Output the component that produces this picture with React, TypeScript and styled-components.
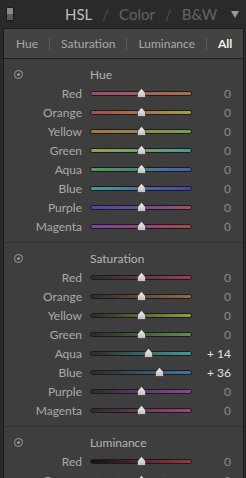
import React from 'react';
import styled, { createGlobalStyle } from 'styled-components';

const GlobalStyle = createGlobalStyle`
  html, body {
    margin: 0;
    padding: 0;
    background: #2a2a2a;
  }
  body {
    width: 246px;
    height: 478px;
    overflow: hidden;
    font-family: Lato, "Open Sans", "DejaVu Sans", sans-serif;
  }
`;

const Header = styled.div`
  height: 28px;
  display: flex;
  align-items: center;
  padding: 0 6px;
  background: #2a2a2a;
`;

const Toggle = styled.div`
  width: 6px;
  height: 12px;
  border: 1px solid #1a1a1a;
  background: linear-gradient(#8a8a8a 0 50%, #5a5a5a 50% 100%);
  border-radius: 1px;
`;

const HeaderTitle = styled.div`
  display: flex;
  align-items: baseline;
  margin-left: 51px;
  font-size: 15px;
`;

const HeaderWord = styled.span<{ $active?: boolean }>`
  color: ${({ $active }) => ($active ? '#bdbdbd' : '#646464')};
`;

const Slash = styled.span`
  color: #4e4e4e;
  margin: 0 10px;
`;

const Caret = styled.div`
  margin-left: auto;
  margin-right: 1px;
  width: 0;
  height: 0;
  border-left: 4px solid transparent;
  border-right: 4px solid transparent;
  border-top: 7px solid #9a9a9a;
`;

const Panel = styled.div`
  margin: 0 2px 0 3px;
  border-left: 1px solid #1b1b1b;
  border-right: 1px solid #1b1b1b;
  background: #3e3e3e;
`;

const TabBar = styled.div`
  height: 29px;
  display: flex;
  align-items: center;
  gap: 11px;
  padding-left: 12px;
  border-top: 1px solid #1b1b1b;
  border-bottom: 1px solid #1e1e1e;
  background: #434343;
  font-size: 12px;
`;

const Tab = styled.span<{ $active?: boolean }>`
  color: ${({ $active }) => ($active ? '#f0f0f0' : '#a8a8a8')};
  font-weight: ${({ $active }) => ($active ? 700 : 400)};
`;

const TabSep = styled.span`
  width: 1px;
  height: 12px;
  background: #5a5a5a;
`;

const Section = styled.div<{ $last?: boolean }>`
  padding: 6px 0 6px;
  border-bottom: ${({ $last }) => ($last ? 'none' : '1px solid #303030')};
  display: grid;
  grid-template-columns: 78px 102px 31px;
  column-gap: 8px;
  grid-auto-rows: 19px;
  align-items: center;
`;

const Target = styled.div`
  justify-self: start;
  margin-left: 10px;
  width: 7px;
  height: 7px;
  border: 1px solid #9a9a9a;
  border-radius: 50%;
  display: flex;
  align-items: center;
  justify-content: center;
  &::after {
    content: '';
    width: 3px;
    height: 3px;
    border-radius: 50%;
    background: #9a9a9a;
  }
`;

const SectionTitle = styled.div`
  grid-column: 2 / 4;
  font-size: 12px;
  color: #b4b4b4;
`;

const Label = styled.div`
  text-align: right;
  font-size: 12px;
  color: #aaaaaa;
`;

const TrackWrap = styled.div`
  position: relative;
  height: 19px;
  display: flex;
  align-items: center;
  &::before,
  &::after {
    content: '';
    position: absolute;
    left: 6px;
    right: 6px;
    height: 1px;
    background: repeating-linear-gradient(
      90deg,
      #4a4a4a 0 1px,
      transparent 1px 22.5px
    );
  }
  &::before {
    top: 4px;
  }
  &::after {
    bottom: 4px;
  }
`;

const Track = styled.div<{ $from: string; $to: string }>`
  width: 100%;
  height: 3px;
  border: 1px solid #1c1c1c;
  border-radius: 3px;
  background: linear-gradient(90deg, ${({ $from }) => $from}, ${({ $to }) => $to});
  box-sizing: content-box;
`;

const Thumb = styled.svg`
  position: absolute;
  top: 4px;
  width: 9px;
  height: 10px;
  margin-left: -4.5px;
`;

const Value = styled.div<{ $changed?: boolean }>`
  text-align: right;
  font-size: 12px;
  color: ${({ $changed }) => ($changed ? '#e2e2e2' : '#8a8a8a')};
`;

type Row = { name: string; from: string; to: string; value: number };

const hue: Row[] = [
  { name: 'Red', from: '#9e4874', to: '#aa7244', value: 0 },
  { name: 'Orange', from: '#a24c52', to: '#a29e4c', value: 0 },
  { name: 'Yellow', from: '#a67448', to: '#78a04c', value: 0 },
  { name: 'Green', from: '#9c9e4a', to: '#469e8c', value: 0 },
  { name: 'Aqua', from: '#529e52', to: '#465eb2', value: 0 },
  { name: 'Blue', from: '#469e96', to: '#4842a0', value: 0 },
  { name: 'Purple', from: '#4846aa', to: '#a84a72', value: 0 },
  { name: 'Magenta', from: '#7a46a0', to: '#a44854', value: 0 },
];

const saturation: Row[] = [
  { name: 'Red', from: '#2c2c2c', to: '#a23c54', value: 0 },
  { name: 'Orange', from: '#2c2c2c', to: '#966c4a', value: 0 },
  { name: 'Yellow', from: '#2c2c2c', to: '#969a46', value: 0 },
  { name: 'Green', from: '#2c2c2c', to: '#5e9048', value: 0 },
  { name: 'Aqua', from: '#2c2c2c', to: '#469a94', value: 14 },
  { name: 'Blue', from: '#2c2c2c', to: '#4474a0', value: 36 },
  { name: 'Purple', from: '#2c2c2c', to: '#8a46a2', value: 0 },
  { name: 'Magenta', from: '#2c2c2c', to: '#a2467c', value: 0 },
];

const luminance: Row[] = [
  { name: 'Red', from: '#121212', to: '#a03444', value: 0 },
  { name: 'Orange', from: '#121212', to: '#a06a40', value: 0 },
];

const fmt = (v: number) => (v > 0 ? `+ ${v}` : v < 0 ? `- ${-v}` : '0');

const SliderRow = ({ row }: { row: Row }) => (
  <>
    <Label>{row.name}</Label>
    <TrackWrap>
      <Track $from={row.from} $to={row.to} />
      <Thumb viewBox="0 0 9 10" style={{ left: `${50 + row.value / 2}%` }}>
        <defs>
          <linearGradient id="thumbFill" x1="0" y1="0" x2="0" y2="1">
            <stop offset="0" stopColor="#f4f4f4" />
            <stop offset="1" stopColor="#bdbdbd" />
          </linearGradient>
        </defs>
        <path d="M4.5 0.5 L8.5 5 L8.5 9.5 L0.5 9.5 L0.5 5 Z" fill="url(#thumbFill)" stroke="#2a2a2a" strokeWidth="0.6" />
      </Thumb>
    </TrackWrap>
    <Value $changed={row.value !== 0}>{fmt(row.value)}</Value>
  </>
);

const SliderSection = ({ title, rows, last }: { title: string; rows: Row[]; last?: boolean }) => (
  <Section $last={last}>
    <Target />
    <SectionTitle>{title}</SectionTitle>
    {rows.map((r) => (
      <SliderRow key={r.name} row={r} />
    ))}
  </Section>
);

const App = () => (
  <>
    <GlobalStyle />
    <Header>
      <Toggle />
      <HeaderTitle>
        <HeaderWord $active>HSL</HeaderWord>
        <Slash>/</Slash>
        <HeaderWord>Color</HeaderWord>
        <Slash>/</Slash>
        <HeaderWord>B&amp;W</HeaderWord>
      </HeaderTitle>
      <Caret />
    </Header>
    <Panel>
      <TabBar>
        <Tab>Hue</Tab>
        <TabSep />
        <Tab>Saturation</Tab>
        <TabSep />
        <Tab>Luminance</Tab>
        <TabSep />
        <Tab $active>All</Tab>
      </TabBar>
      <SliderSection title="Hue" rows={hue} />
      <SliderSection title="Saturation" rows={saturation} />
      <SliderSection title="Luminance" rows={luminance} last />
    </Panel>
  </>
);

export default App;
